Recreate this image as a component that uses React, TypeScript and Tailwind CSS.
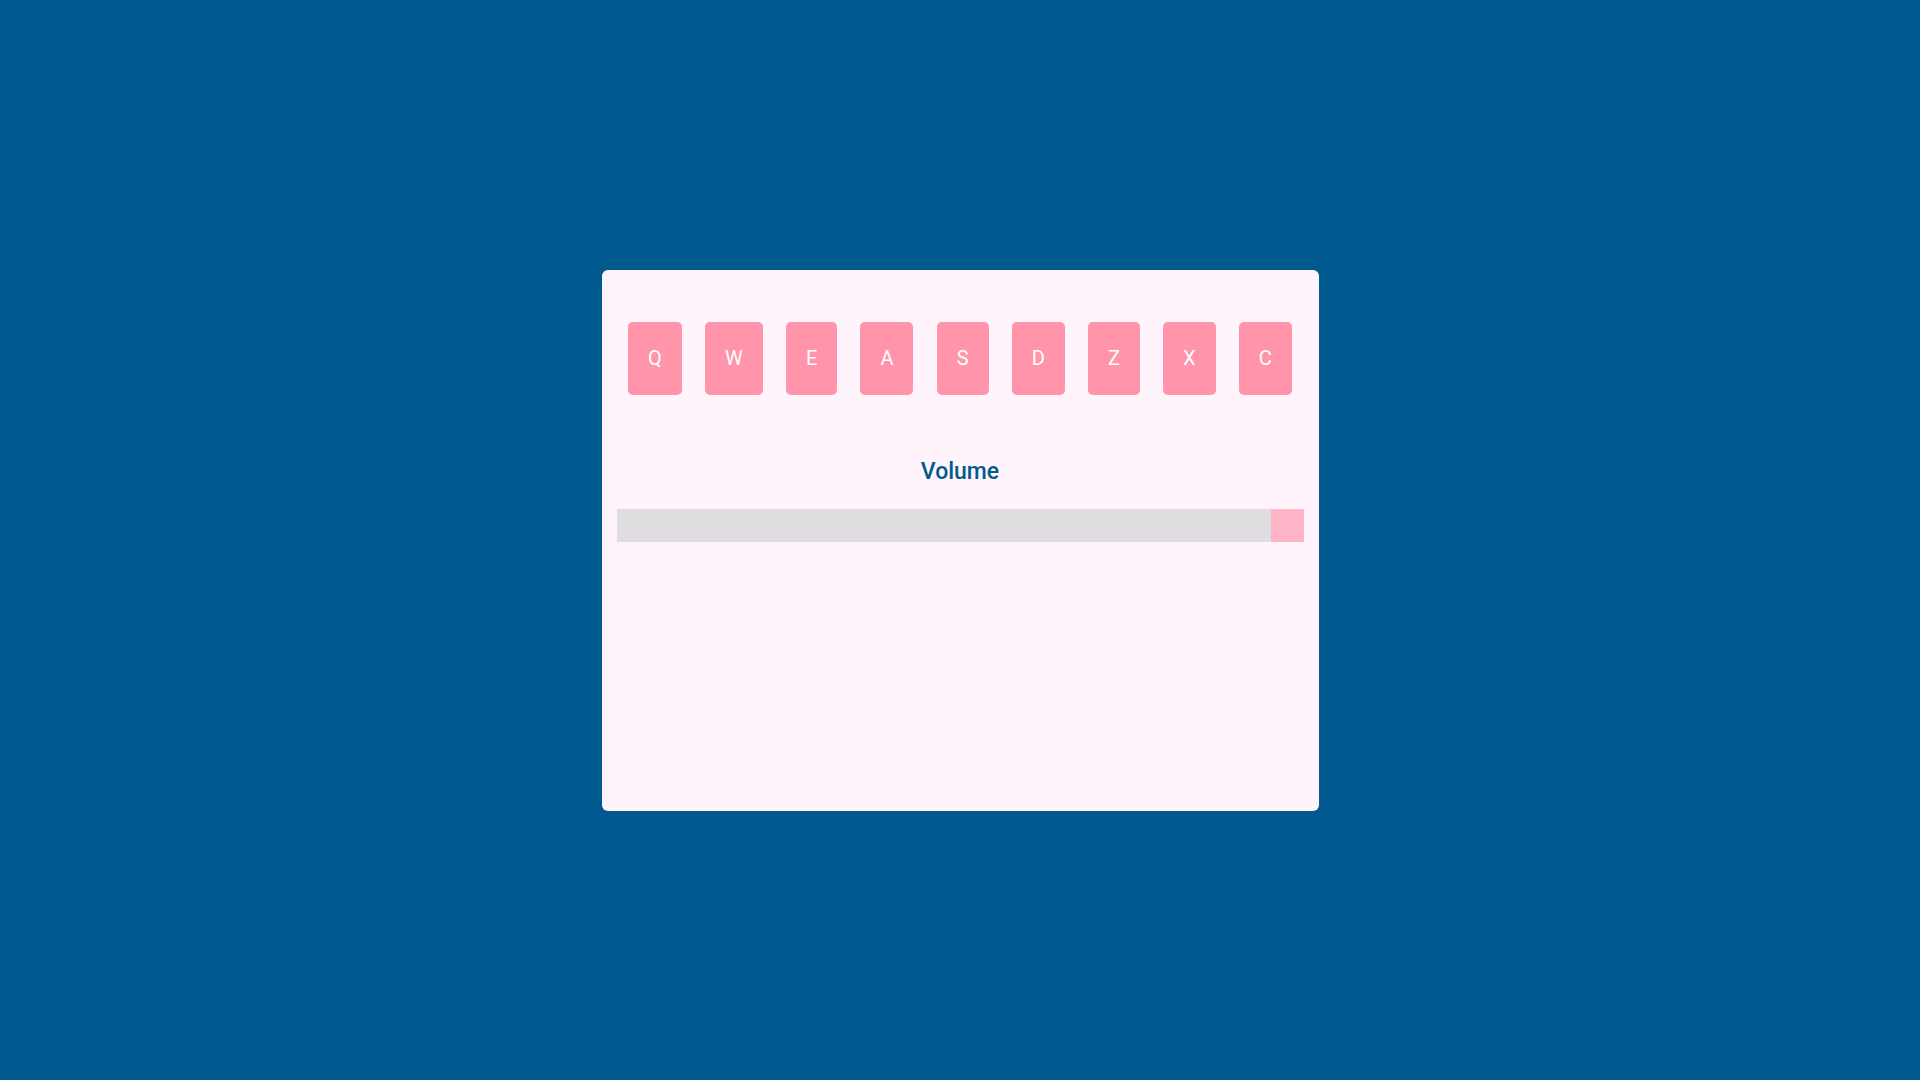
const KEYS = ["Q", "W", "E", "A", "S", "D", "Z", "X", "C"];

export default function App() {
  return (
    <main className="min-h-screen w-full bg-[#005a8f] flex items-center justify-center font-['Roboto',sans-serif]">
      <div className="w-[717px] h-[541px] bg-[#fff4fc] rounded-md p-[15px] flex flex-col">
        <div className="mt-[37px] flex justify-around">
          {KEYS.map((k) => (
            <button
              key={k}
              className="h-[73px] px-5 rounded-[5px] bg-[#ff94ab] text-white text-[20px] font-normal flex items-center justify-center"
            >
              {k}
            </button>
          ))}
        </div>

        <h2 className="mt-[63px] text-center text-[23px] leading-[28px] font-medium text-[#005a8f]">
          Volume
        </h2>

        <div className="mt-[23px] h-[33px] bg-[#dfdddf] flex justify-end">
          <div className="w-[33px] h-[33px] bg-[#ffb3c6]" />
        </div>
      </div>
    </main>
  );
}
